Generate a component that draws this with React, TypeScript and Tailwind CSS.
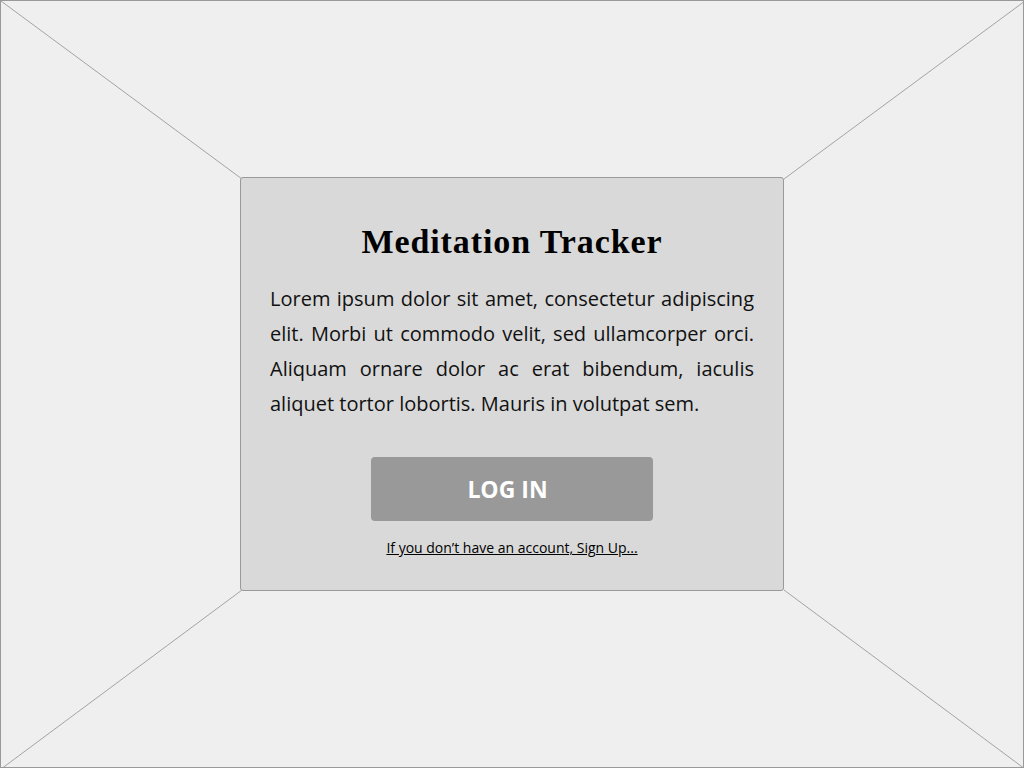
import React from "react";

export default function App() {
  return (
    <div className="relative w-[1024px] h-[768px] bg-[#efefef] border border-[#999999] overflow-hidden">
      <svg className="absolute inset-0 pointer-events-none" width="1024" height="768">
        <line x1="0" y1="0" x2="241" y2="178" stroke="#a3a3a3" strokeWidth="1" />
        <line x1="1024" y1="0" x2="783" y2="178" stroke="#a3a3a3" strokeWidth="1" />
        <line x1="0" y1="768" x2="241" y2="589" stroke="#a3a3a3" strokeWidth="1" />
        <line x1="1024" y1="768" x2="783" y2="589" stroke="#a3a3a3" strokeWidth="1" />
      </svg>
      <div className="relative flex justify-center pt-[176px]">
        <div className="w-[544px] h-[414px] bg-[#d9d9d9] border border-[#999999] rounded-[3px] px-[29px] pt-[44px] flex flex-col items-center">
          <h1 className="text-[34px] font-bold text-black leading-[40px] tracking-[0.9px]" style={{ fontFamily: '"Liberation Serif", serif' }}>
            Meditation Tracker
          </h1>
          <p className="mt-[19px] text-[20px] leading-[35px] text-[#111111] text-justify w-full" style={{ fontFamily: '"Open Sans", sans-serif', textAlignLast: "left" }}>
            Lorem ipsum dolor sit amet, consectetur adipiscing elit. Morbi ut commodo velit, sed ullamcorper orci. Aliquam ornare dolor ac erat bibendum, iaculis aliquet tortor lobortis. Mauris in volutpat sem.
          </p>
          <button className="mt-[36px] w-[282px] h-[64px] bg-[#999999] rounded-[4px] text-white font-bold text-[23px] pr-[9px]" style={{ fontFamily: '"Open Sans", sans-serif' }}>
            LOG IN
          </button>
          <a className="mt-[16px] text-[14px] text-black underline" style={{ fontFamily: '"Open Sans", sans-serif' }}>
            If you don’t have an account, Sign Up...
          </a>
        </div>
      </div>
    </div>
  );
}
